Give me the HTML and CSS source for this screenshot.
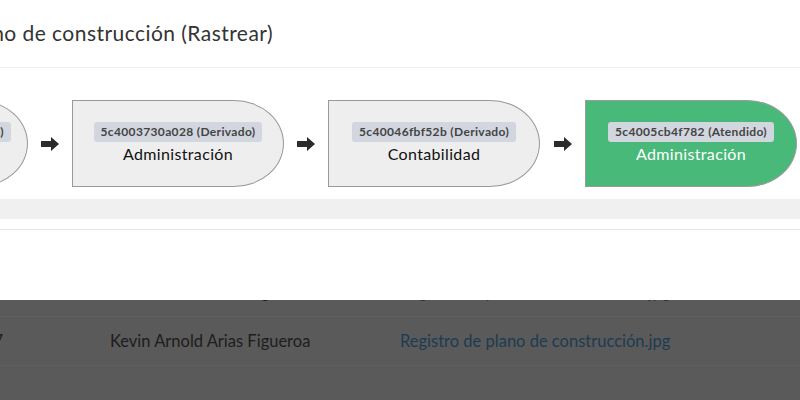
FILE: index.html
```html
<!DOCTYPE html>
<html lang="es">
<head>
<meta charset="utf-8">
<title>Rastrear</title>
<link rel="stylesheet" href="styles.css">
</head>
<body>
<div class="modal">
  <div class="modal-header">
    <div class="title-clip"><h4 class="title">Registro de plano de construcción (Rastrear)</h4></div>
  </div>
  <div class="modal-body">
    <div class="flow-clip">
      <div class="flow">
        <div class="node"><span class="tag">5c4002e81b4d5 (Registrado)</span><span class="area">Mesa de partes</span></div>
        <div class="arrow"><svg viewBox="0 0 18 14" width="18" height="14"><path d="M0 4H10V0L18 7L10 14V10H0Z"/></svg></div>
        <div class="node"><span class="tag">5c4003730a028 (Derivado)</span><span class="area">Administración</span></div>
        <div class="arrow"><svg viewBox="0 0 18 14" width="18" height="14"><path d="M0 4H10V0L18 7L10 14V10H0Z"/></svg></div>
        <div class="node"><span class="tag">5c40046fbf52b (Derivado)</span><span class="area">Contabilidad</span></div>
        <div class="arrow wide"><svg viewBox="0 0 18 14" width="18" height="14"><path d="M0 4H10V0L18 7L10 14V10H0Z"/></svg></div>
        <div class="node done"><span class="tag">5c4005cb4f782 (Atendido)</span><span class="area">Administración</span></div>
      </div>
    </div>
    <div class="track"></div>
  </div>
  <div class="modal-footer"></div>
</div>
<div class="page">
  <div class="rows">
    <div class="row">
      <div class="cell first"><span>17/01/2019</span></div>
      <div class="cell name">Kevin Arnold Arias Figueroa</div>
      <div class="cell file"><a href="#">Registro de plano de construcción.jpg</a></div>
    </div>
    <div class="row">
      <div class="cell first"><span>17/01/2017</span></div>
      <div class="cell name">Kevin Arnold Arias Figueroa</div>
      <div class="cell file"><a href="#">Registro de plano de construcción.jpg</a></div>
    </div>
  </div>
</div>
</body>
</html>
```

FILE: styles.css
```css
* { box-sizing: border-box; }
html, body { margin: 0; padding: 0; }
body {
  width: 800px;
  height: 400px;
  overflow: hidden;
  background: #5a5a5a;
  font-family: Lato, "Noto Sans", sans-serif;
}
.modal {
  background: #fff;
  height: 300px;
}
.modal-header {
  height: 68px;
  padding-top: 19px;
  border-bottom: 1px solid #eeeeee;
}
.title-clip {
  width: 273px;
  display: flex;
  justify-content: flex-end;
  overflow: hidden;
}
.title {
  margin: 0;
  flex: none;
  white-space: nowrap;
  font-size: 21px;
  letter-spacing: 0.45px;
  line-height: 28px;
  font-weight: 400;
  color: #333;
}
.modal-body {
  padding-top: 32px;
}
.flow-clip {
  overflow: hidden;
}
.flow {
  display: flex;
  margin-left: -184px;
}
.node {
  flex: none;
  width: 212px;
  height: 87px;
  background: #eeeeee;
  border: 1px solid #999;
  border-radius: 0 50px 50px 0 / 0 43.5px 43.5px 0;
  display: flex;
  flex-direction: column;
  align-items: center;
  justify-content: center;
}
.node.done {
  background: #49b97a;
  border-color: #9a9a9a;
}
.tag {
  background: #d2d6de;
  color: #444;
  font-weight: 700;
  font-size: 12px;
  letter-spacing: 0.35px;
  line-height: 20px;
  padding: 0 7px;
  border-radius: 3px;
  white-space: nowrap;
}
.area {
  font-size: 16px;
  letter-spacing: 0.35px;
  line-height: 24px;
  color: #111;
  white-space: nowrap;
}
.done .area { color: #fff; }
.arrow {
  flex: none;
  width: 44px;
  display: flex;
  align-items: center;
  justify-content: center;
  padding-top: 1px;
}
.arrow.wide { width: 45px; }
.arrow svg { fill: #2b2b2b; display: block; }
.track {
  margin-top: 12px;
  height: 20px;
  background: #f0f0f0;
}
.modal-footer {
  margin-top: 10px;
  border-top: 1px solid #e5e5e5;
}
.page {
  height: 100px;
  overflow: hidden;
}
.rows {
  margin-top: -32px;
}
.row {
  display: flex;
  align-items: center;
  height: 49px;
  border-bottom: 1px solid #606060;
  font-size: 16.5px;
  color: #1d1d1d;
}
.cell.first {
  width: 3px;
  display: flex;
  justify-content: flex-end;
  overflow: hidden;
  margin-right: 107px;
}
.cell.first span { flex: none; white-space: nowrap; }
.cell.name { width: 290px; white-space: nowrap; }
.cell.file a { color: #1d3a52; text-decoration: none; white-space: nowrap; }
```
